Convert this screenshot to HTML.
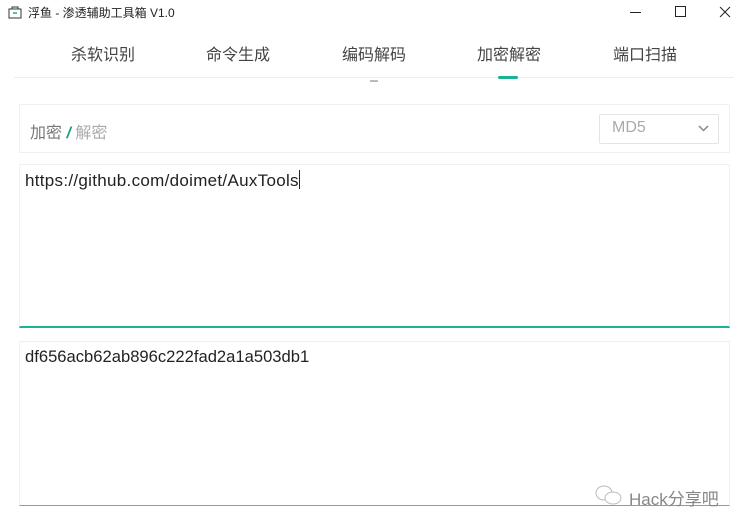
<!DOCTYPE html>
<html><head><meta charset="utf-8"><style>
*{margin:0;padding:0;box-sizing:border-box}
body{width:747px;height:528px;background:#fff;font-family:"Liberation Sans","Noto Sans CJK SC",sans-serif;position:relative;overflow:hidden;color:#333}
.a{position:absolute}
.tab{position:absolute;top:41px;font-size:16px;color:#444}
</style></head><body>
<svg class="a" style="left:8px;top:6px" width="14" height="13" viewBox="0 0 14 13"><rect x="1" y="3" width="12" height="9" fill="none" stroke="#333"/><rect x="4" y="1" width="6" height="2" fill="none" stroke="#333"/><line x1="5" y1="7" x2="9" y2="7" stroke="#1aae8a" stroke-width="1.5"/></svg>
<div class="a" style="left:28px;top:4px;font-size:12px;color:#222">浮鱼 - 渗透辅助工具箱 V1.0</div>
<div class="a" style="left:630px;top:12px;width:11px;height:1px;background:#222"></div>
<div class="a" style="left:675px;top:6px;width:11px;height:11px;border:1px solid #222"></div>
<svg class="a" style="left:719px;top:6px" width="12" height="12"><path d="M1 1L11 11M11 1L1 11" stroke="#222" stroke-width="1"/></svg>
<div class="tab" style="left:71px">杀软识别</div>
<div class="tab" style="left:206px">命令生成</div>
<div class="tab" style="left:342px">编码解码</div>
<div class="tab" style="left:477px">加密解密</div>
<div class="tab" style="left:613px">端口扫描</div>
<div class="a" style="left:14px;top:77px;width:720px;height:1px;background:#eee"></div>
<div class="a" style="left:498px;top:76px;width:20px;height:3px;border-radius:2px;background:#1ab394"></div>
<div class="a" style="left:370px;top:80px;width:8px;height:2px;background:#bbb"></div>
<div class="a" style="left:19px;top:104px;width:711px;height:49px;border:1px solid #f0f0f0"></div>
<div class="a" style="left:30px;top:119px;font-size:16px;color:#777">加密 <span style="color:#1a9e85;font-weight:bold;font-style:italic">/</span> <span style="color:#aaa">解密</span></div>
<div class="a" style="left:599px;top:114px;width:120px;height:30px;border:1px solid #e4e4e4;border-radius:2px"></div>
<div class="a" style="left:612px;top:119px;font-size:16px;color:#aaa">MD5</div>
<svg class="a" style="left:698px;top:125px" width="11" height="7"><path d="M1 1L5.5 5.5L10 1" fill="none" stroke="#888" stroke-width="1.5"/></svg>
<div class="a" style="left:19px;top:164px;width:711px;height:164px;border:1px solid #f0f0f0;border-bottom:2px solid #1ab394"></div>
<div class="a" style="left:25px;top:170px;font-size:17px;letter-spacing:0.3px;color:#222">https://github.com/doimet/AuxTools<span style="display:inline-block;width:1px;height:19px;background:#222;vertical-align:-3px"></span></div>
<div class="a" style="left:19px;top:341px;width:711px;height:165px;border:1px solid #f0f0f0;border-bottom:1px solid #999"></div>
<div class="a" style="left:25px;top:347px;font-size:16.6px;color:#222">df656acb62ab896c222fad2a1a503db1</div>
<svg class="a" style="left:594px;top:484px" width="30" height="22"><ellipse cx="10" cy="9" rx="8" ry="7" fill="none" stroke="#bbb"/><ellipse cx="19" cy="14" rx="8" ry="6" fill="#fff" stroke="#bbb"/></svg>
<div class="a" style="left:629px;top:485px;font-size:17px;color:#888">Hack分享吧</div>
</body></html>
